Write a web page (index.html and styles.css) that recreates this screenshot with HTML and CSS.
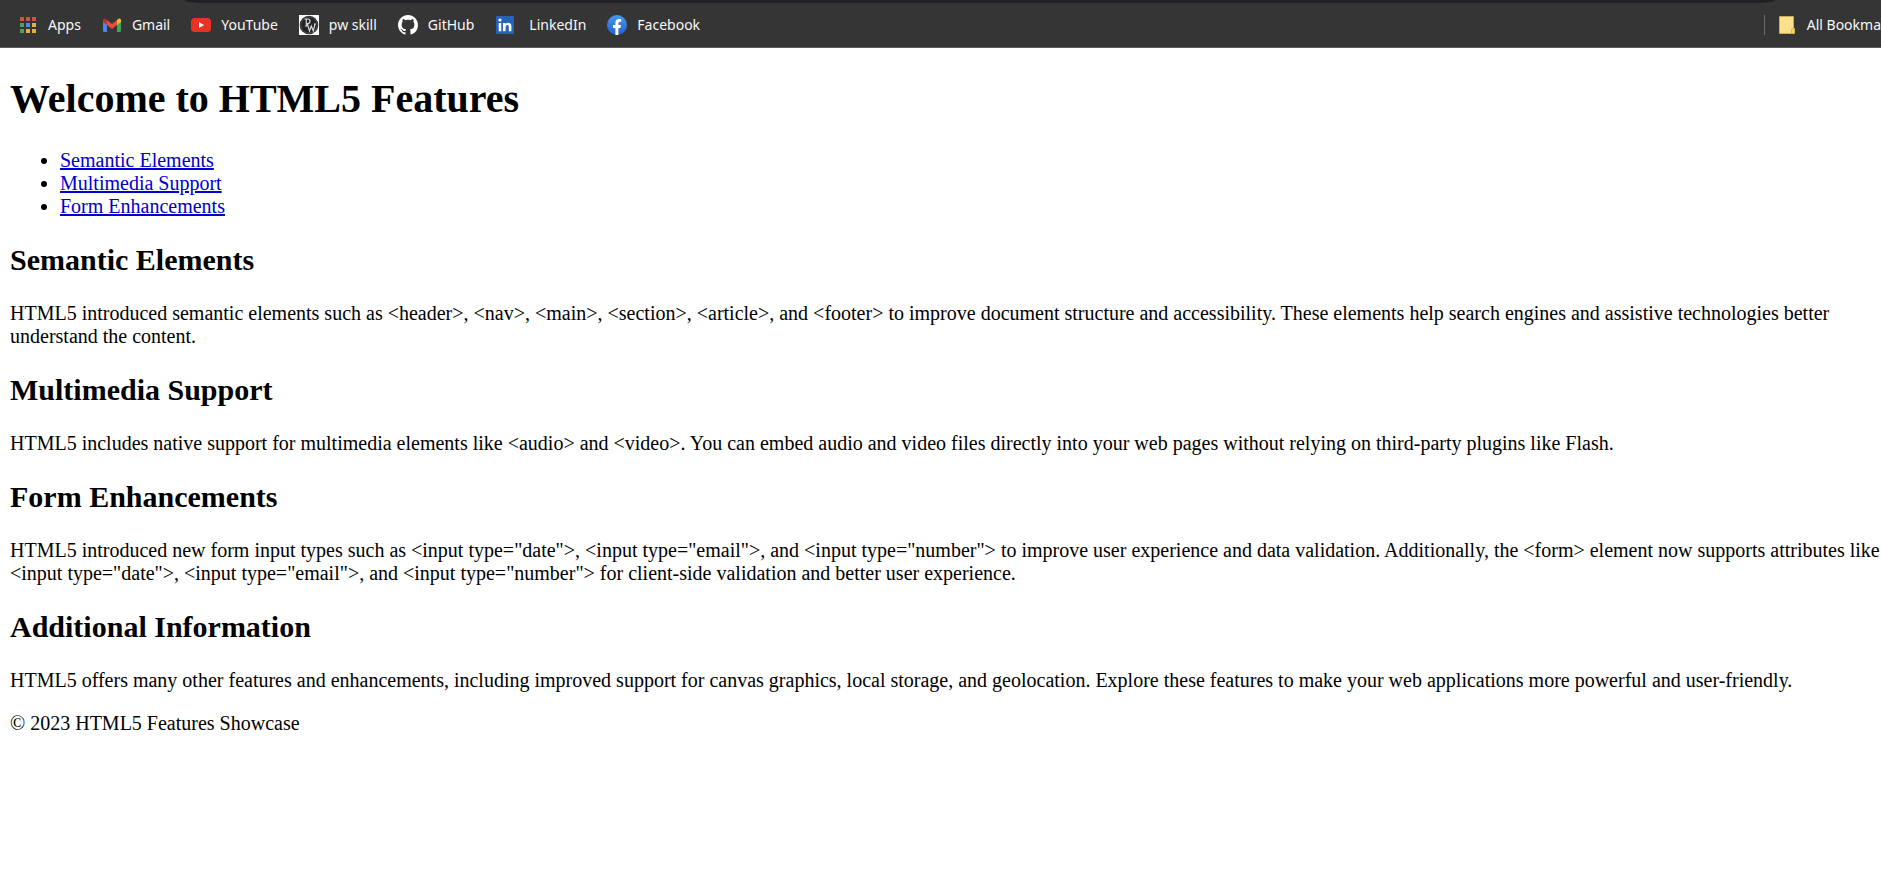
FILE: index.html
```html
<!DOCTYPE html>
<html lang="en">
<head>
<meta charset="utf-8">
<title>HTML5 Features</title>
<link rel="stylesheet" href="styles.css">
</head>
<body>
<div class="browser-bar">
  <div class="address-edge"></div>
  <nav class="bookmarks" aria-label="Bookmarks">
    <a class="bookmark" href="#"><svg class="icon" viewBox="0 0 20 20"><path fill="#d9503f" d="M2 2h4v4H2zM8 2h4v4H8zM14 2h4v4h-4z"/><path fill="#4f9e63" d="M2 8h4v4H2zM2 14h4v4H2z"/><path fill="#4a8af0" d="M8 8h4v4H8z"/><path fill="#e8ad45" d="M14 8h4v4h-4zM8 14h4v4H8zM14 14h4v4h-4z"/></svg>Apps</a>
    <a class="bookmark" href="#"><svg class="icon" viewBox="0 0 20 20"><path fill="#4a86ec" d="M1 6l4 3v8H2.300Q1 17 1 15.700z"/><path fill="#42a556" d="M15 9l4-3v9.700Q19 17 17.700 17H15z"/><path fill="#f4bd2f" d="M15 5l1-.8Q17 3.300 18 3.600 19 4 19 5.300V7l-4 3z"/><path fill="#b9352c" d="M1 5.300Q1 4 2 3.600 3 3.300 4 4.200L5 5v5L1 7z"/><path fill="#e64b3c" d="M5 5l5 4 5-4v5l-5 4-5-4z"/></svg>Gmail</a>
    <a class="bookmark" href="#"><svg class="icon" viewBox="0 0 20 20"><rect y="3" width="20" height="14" rx="3.500" fill="#e93124"/><path fill="#fff" d="M8 7l5 3-5 3z"/></svg>YouTube</a>
    <a class="bookmark" href="#"><svg class="icon" viewBox="0 0 20 20"><path fill="#fff" d="M0 0h20v20H0z"/><circle cx="10" cy="10" r="9.300" fill="#222426"/><circle cx="10" cy="10" r="8.200" fill="none" stroke="#777" stroke-width=".5"/><path fill="none" stroke="#d4d4d4" stroke-width="1.200" d="M5.500 4H9q2 0 2 2.200T9 8.500H7.500M7.300 4v7M6 11h2.600M8.500 9l2 7 1.800-5 2 5 1.700-7M7.500 9h2M14.800 9h2.200"/></svg>pw skill</a>
    <a class="bookmark" href="#"><svg class="icon" viewBox="0 0 16 16"><path fill="#fff" d="M8 0C3.580 0 0 3.580 0 8c0 3.540 2.290 6.530 5.470 7.590.4.070.55-.17.55-.38 0-.19-.01-.82-.01-1.490-2.010.37-2.530-.49-2.690-.94-.09-.23-.48-.94-.82-1.130-.28-.15-.68-.52-.01-.53.63-.01 1.080.58 1.230.82.72 1.210 1.870.87 2.330.66.07-.52.28-.87.51-1.070-1.780-.2-3.640-.89-3.640-3.950 0-.87.31-1.590.82-2.150-.08-.2-.36-1.020.08-2.120 0 0 .67-.21 2.200.82.64-.18 1.320-.27 2-.27s1.360.09 2 .27c1.530-1.040 2.200-.82 2.200-.82.44 1.100.16 1.920.08 2.120.51.56.82 1.270.82 2.150 0 3.070-1.870 3.750-3.650 3.950.29.25.54.73.54 1.480 0 1.070-.01 1.930-.01 2.200 0 .21.15.46.55.38A8.010 8.010 0 0 0 16 8c0-4.420-3.580-8-8-8z"/></svg>GitHub</a>
    <a class="bookmark" href="#"><svg class="icon icon-wide" viewBox="0 0 24 20"><rect x="1" y="1" width="18" height="18" rx="1" fill="#2761b8"/><g fill="#fff"><circle cx="5" cy="5" r="1.600"/><path d="M3.700 8h2.600v8.300H3.700zM8 8h2.500v1.200q.8-1.400 2.700-1.400 3.200 0 3.200 3.700v4.800h-2.600V12q0-2-1.500-2-1.700 0-1.700 2v4.300H8z"/></g></svg>LinkedIn</a>
    <a class="bookmark" href="#"><svg class="icon" viewBox="0 0 20 20"><defs><linearGradient id="fb" x2="0" y2="1"><stop stop-color="#4a98f0"/><stop offset="1" stop-color="#2460d0"/></linearGradient></defs><circle cx="10" cy="10" r="10" fill="url(#fb)"/><path fill="#fff" d="M8.400 20v-7H6v-3h2.400V8q0-4 3.800-4 1 0 2 .2v2.500h-1.300q-1.500 0-1.500 1.500V10H14l-.5 3h-2.100v7z"/></svg>Facebook</a>
    <a class="bookmark all-bookmarks" href="#"><svg class="icon" viewBox="0 0 20 20"><path fill="#f9e08b" stroke="#dcbd58" stroke-width=".7" d="M2.500 1.500h14V13l1 .5v5h-15z"/><path fill="#f5d468" stroke="#c9a844" stroke-width=".7" d="M14.500 18.500v-4l1.500-1.500 1.500.5v5z"/></svg><span>All Bookma</span></a>
  </nav>
</div>
<div class="page">
  <header>
    <h1>Welcome to HTML5 Features</h1>
    <nav>
      <ul>
        <li><a href="#semantic">Semantic Elements</a></li>
        <li><a href="#multimedia">Multimedia Support</a></li>
        <li><a href="#forms">Form Enhancements</a></li>
      </ul>
    </nav>
  </header>
  <main>
    <section id="semantic">
      <h2>Semantic Elements</h2>
      <p>HTML5 introduced semantic elements such as &lt;header&gt;, &lt;nav&gt;, &lt;main&gt;, &lt;section&gt;, &lt;article&gt;, and &lt;footer&gt; to improve document structure and accessibility. These elements help search engines and assistive technologies better understand the content.</p>
    </section>
    <section id="multimedia">
      <h2>Multimedia Support</h2>
      <p>HTML5 includes native support for multimedia elements like &lt;audio&gt; and &lt;video&gt;. You can embed audio and video files directly into your web pages without relying on third-party plugins like Flash.</p>
    </section>
    <section id="forms">
      <h2>Form Enhancements</h2>
      <p>HTML5 introduced new form input types such as &lt;input type="date"&gt;, &lt;input type="email"&gt;, and &lt;input type="number"&gt; to improve user experience and data validation. Additionally, the &lt;form&gt; element now supports attributes like &lt;input type="date"&gt;, &lt;input type="email"&gt;, and &lt;input type="number"&gt; for client-side validation and better user experience.</p>
    </section>
    <section>
      <h2>Additional Information</h2>
      <p>HTML5 offers many other features and enhancements, including improved support for canvas graphics, local storage, and geolocation. Explore these features to make your web applications more powerful and user-friendly.</p>
    </section>
  </main>
  <footer>
    <p>© 2023 HTML5 Features Showcase</p>
  </footer>
</div>
</body>
</html>
```
FILE: styles.css
```css
body {
  margin: 0;
  background: #fff;
  color: #000;
  font: 20px/23px "Liberation Serif", "Times New Roman", serif;
}

.browser-bar {
  background: #353535;
  border-bottom: 1px solid #5c5a5c;
}

.address-edge {
  height: 3px;
  margin: 0 106px 0 185px;
  background: #202124;
  border-radius: 0 0 16px 16px / 0 0 3px 3px;
}

.bookmarks {
  display: flex;
  align-items: center;
  gap: 21px;
  height: 44px;
  padding-left: 18px;
  font: 14px/20px "Noto Sans", "Open Sans", sans-serif;
}

.bookmark {
  display: flex;
  flex: none;
  align-items: center;
  gap: 10px;
  color: #f8f8f8;
  text-decoration: none;
  white-space: nowrap;
}

.icon {
  flex: none;
  width: 20px;
  height: 20px;
}

.icon-wide {
  width: 24px;
}

.all-bookmarks {
  margin-left: auto;
  padding-left: 12px;
  border-left: 1px solid #6a6a6a;
}

.page {
  padding-left: 10px;
}

h1 {
  margin: 0;
  padding: 28px 0 27px;
  font-size: 40px;
  line-height: 46px;
}

h2 {
  margin: 25px 0;
  font-size: 30px;
  line-height: 34px;
}

ul {
  margin: 0;
  padding-left: 50px;
}

li a {
  color: #0000cc;
  text-decoration-thickness: 2px;
}

p {
  margin: 20px 0;
}
```
